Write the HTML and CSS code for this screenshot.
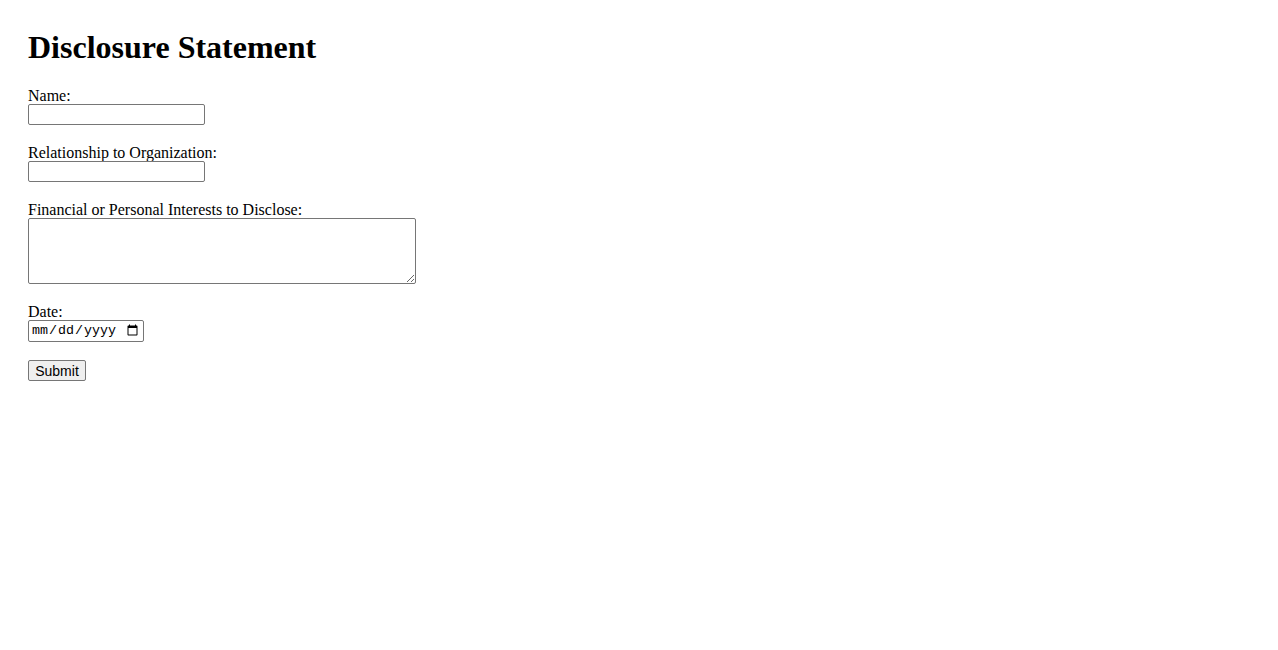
FILE: index.html
```html
<!DOCTYPE html>
<html lang="en">
<head>
<meta charset="utf-8">
<title>Disclosure Statement</title>
<link rel="stylesheet" href="styles.css">
</head>
<body class="page">
<h1 class="title">Disclosure Statement</h1>
<form class="form">
  <div class="field">
    <label class="label" for="name">Name:</label>
    <input class="text-input" type="text" id="name" name="name">
  </div>
  <div class="field">
    <label class="label" for="rel">Relationship to Organization:</label>
    <input class="text-input" type="text" id="rel" name="rel">
  </div>
  <div class="field">
    <label class="label" for="interests">Financial or Personal Interests to Disclose:</label>
    <textarea class="textarea" id="interests" name="interests"></textarea>
  </div>
  <div class="field">
    <label class="label" for="date">Date:</label>
    <input class="date-input" type="date" id="date" name="date">
  </div>
  <div class="field">
    <button class="submit" type="submit">Submit</button>
  </div>
</form>
</body>
</html>
```

FILE: styles.css
```css
html, body {
  background: #ffffff;
}
.page {
  margin: 0;
  padding: 29px 28px 28px;
  font-family: "Liberation Serif", "Times New Roman", serif;
  font-size: 16px;
  color: #000000;
}
.title {
  margin: 0 0 20px;
  font-size: 32px;
  font-weight: bold;
  line-height: 37px;
}
.form {
  display: flex;
  flex-direction: column;
  align-items: flex-start;
}
.field {
  display: flex;
  flex-direction: column;
  align-items: flex-start;
  margin-bottom: 18px;
}
.label {
  display: block;
  padding-top: 1px;
  line-height: 17px;
}
.text-input {
  box-sizing: border-box;
  width: 177px;
  height: 21px;
  margin: 0;
  padding: 1px 2px;
  border: 1px solid #767676;
  border-radius: 2px;
  font-family: "Liberation Sans", Arial, sans-serif;
  font-size: 13.33px;
}
.textarea {
  box-sizing: border-box;
  width: 388px;
  height: 66px;
  margin: 0;
  padding: 2px;
  border: 1px solid #767676;
  border-radius: 2px;
  font-family: "Liberation Mono", monospace;
  font-size: 13.33px;
}
.date-input {
  box-sizing: border-box;
  width: 116px;
  height: 22px;
  margin: 0;
  padding: 1px 2px;
  border: 1px solid #767676;
  border-radius: 2px;
  font-family: "Liberation Mono", monospace;
  font-size: 13.33px;
}
.submit {
  box-sizing: border-box;
  width: 58px;
  height: 21px;
  margin: 0;
  padding: 1px 4px;
  border: 1px solid #767676;
  border-radius: 2px;
  background: #efefef;
  font-family: "Liberation Sans", Arial, sans-serif;
  font-size: 14px;
  color: #000000;
}
```
